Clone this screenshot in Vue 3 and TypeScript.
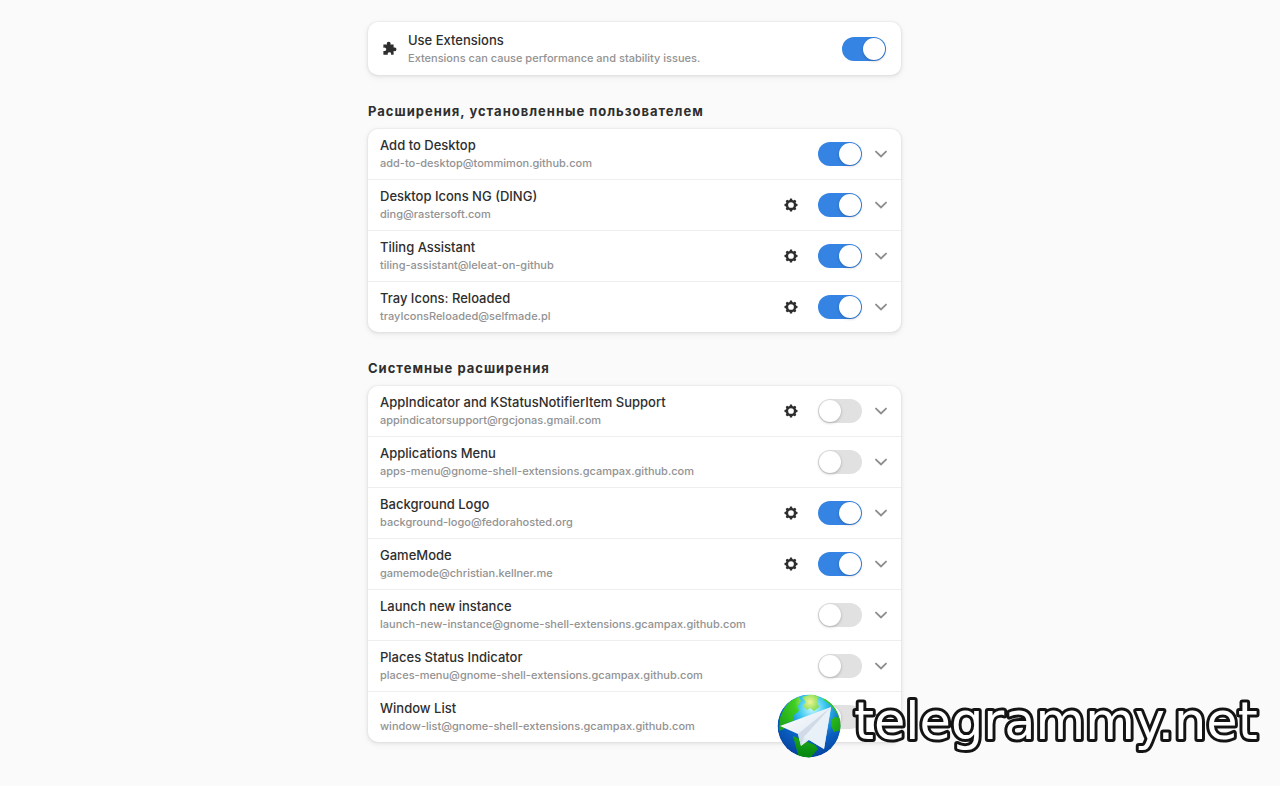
<script setup lang="ts">
import { reactive, ref } from 'vue'

interface Extension {
  name: string
  uuid: string
  enabled: boolean
  hasSettings: boolean
}

interface Group {
  id: string
  title: string
  items: Extension[]
}

const useExtensions = ref(true)

const ext = (name: string, uuid: string, enabled: boolean, hasSettings: boolean): Extension => ({
  name,
  uuid,
  enabled,
  hasSettings,
})

const groups = reactive<Group[]>([
  {
    id: 'user',
    title: 'Расширения, установленные пользователем',
    items: [
      ext('Add to Desktop', 'add-to-desktop@tommimon.github.com', true, false),
      ext('Desktop Icons NG (DING)', 'ding@rastersoft.com', true, true),
      ext('Tiling Assistant', 'tiling-assistant@leleat-on-github', true, true),
      ext('Tray Icons: Reloaded', 'trayIconsReloaded@selfmade.pl', true, true),
    ],
  },
  {
    id: 'system',
    title: 'Системные расширения',
    items: [
      ext('AppIndicator and KStatusNotifierItem Support', 'appindicatorsupport@rgcjonas.gmail.com', false, true),
      ext('Applications Menu', 'apps-menu@gnome-shell-extensions.gcampax.github.com', false, false),
      ext('Background Logo', 'background-logo@fedorahosted.org', true, true),
      ext('GameMode', 'gamemode@christian.kellner.me', true, true),
      ext('Launch new instance', 'launch-new-instance@gnome-shell-extensions.gcampax.github.com', false, false),
      ext('Places Status Indicator', 'places-menu@gnome-shell-extensions.gcampax.github.com', false, false),
      ext('Window List', 'window-list@gnome-shell-extensions.gcampax.github.com', false, false),
    ],
  },
])

const teeth = [0, 45, 90, 135, 180, 225, 270, 315]
</script>

<template>
  <main class="page">
    <div class="column">
      <section class="card master">
        <svg class="icon" viewBox="0 0 16 16" aria-hidden="true">
          <path
            fill="#2e2e2e"
            d="M2 3.4h3a1.9 1.9 0 1 1 3.4 0h3.2v3.2h.6a1.8 1.8 0 1 1 0 3.5h-.6v3.7H9.1v-.5a1.7 1.7 0 1 0-3.3 0v.5H1.4V9.9H2a1.7 1.7 0 1 0 0-3.2h-.6V3.4Z"
          />
        </svg>
        <label class="text" for="use-extensions">
          <span class="name">Use Extensions</span>
          <span class="detail">Extensions can cause performance and stability issues.</span>
        </label>
        <input id="use-extensions" v-model="useExtensions" class="switch" type="checkbox" role="switch" />
      </section>

      <section v-for="group in groups" :key="group.id" class="group">
        <h2 class="heading">{{ group.title }}</h2>
        <ul class="card list">
          <li v-for="item in group.items" :key="item.uuid" class="row">
            <label class="text" :for="item.uuid">
              <span class="name">{{ item.name }}</span>
              <span class="detail">{{ item.uuid }}</span>
            </label>
            <button v-if="item.hasSettings" class="icon-button gear" type="button" :aria-label="item.name">
              <svg class="icon" viewBox="0 0 16 16" aria-hidden="true">
                <circle cx="8" cy="8" r="4.1" fill="none" stroke="#2e2e2e" stroke-width="2.5" />
                <rect
                  v-for="angle in teeth"
                  :key="angle"
                  x="6.8"
                  y="1.5"
                  width="2.4"
                  height="2.4"
                  rx="0.6"
                  fill="#2e2e2e"
                  :transform="`rotate(${angle} 8 8)`"
                />
              </svg>
            </button>
            <input :id="item.uuid" v-model="item.enabled" class="switch" type="checkbox" role="switch" />
            <button class="icon-button" type="button" :aria-label="item.name">
              <svg class="icon" viewBox="0 0 16 16" aria-hidden="true">
                <path d="M3 5.6 8 10.4 13 5.6" fill="none" stroke="#8e8e8e" stroke-width="1.9" stroke-linecap="round" />
              </svg>
            </button>
          </li>
        </ul>
      </section>
    </div>

    <a class="watermark" href="#">
      <svg class="globe" viewBox="0 0 64 64" aria-hidden="true">
        <defs>
          <radialGradient id="sea" cx="0.55" cy="0.22" r="0.8">
            <stop offset="0" stop-color="#c8fbff" />
            <stop offset="0.28" stop-color="#35c4ee" />
            <stop offset="0.62" stop-color="#0a62c4" />
            <stop offset="1" stop-color="#06409c" />
          </radialGradient>
          <radialGradient id="land" gradientUnits="userSpaceOnUse" cx="33" cy="8" r="52">
            <stop offset="0" stop-color="#f2f59a" />
            <stop offset="0.3" stop-color="#3fce22" />
            <stop offset="1" stop-color="#078a12" />
          </radialGradient>
          <linearGradient id="wing" x1="0" y1="0" x2="1" y2="1">
            <stop offset="0" stop-color="#ffffff" />
            <stop offset="1" stop-color="#d3e0ee" />
          </linearGradient>
          <clipPath id="disc"><circle cx="32" cy="32" r="31.5" /></clipPath>
        </defs>
        <g clip-path="url(#disc)">
          <circle cx="32" cy="32" r="31.5" fill="url(#sea)" />
          <path fill="url(#land)" d="M3 24C7 12 14 5 22 3l2 4-3 5 1 5-5 4-1 6-6 2-3 6-5 2Z" />
          <path fill="url(#land)" d="M25 3l11-3 6 3-2 5 2 5-5 4-4-3-3 2-4-4 3-4Z" />
          <path fill="url(#land)" d="M45 5c9 5 14 12 17 19l-5-1-3 6 3 7 6 1 1-20-10-15Z" />
          <path fill="url(#land)" d="M55 25l9-2v13l-7 2-3-6Z" />
          <path fill="url(#land)" d="M16 42l10 4 12 5 3 4-8 9H22l-3-11Z" />
        </g>
        <path fill="url(#wing)" d="M3 32 54 13 47 55 32 46 24 52 21 40Z" />
        <path fill="#d0dbe7" d="M21 40 54 13 27 43 24 52Z" />
        <path fill="#e8f0f8" d="M27 43 54 13 47 55Z" />
      </svg>
      <svg class="brand" viewBox="0 0 414 64">
        <text x="5" y="45">telegrammy.net</text>
      </svg>
    </a>
  </main>
</template>

<style>
body {
  margin: 0;
  background: #fafafa;
}
</style>

<style scoped>
.page {
  box-sizing: border-box;
  min-height: 100vh;
  padding: 22px 11px 44px 0;
  background: #fafafa;
  color: #2e2e2e;
  font-family: Inter, 'Noto Sans', sans-serif;
}

.column {
  max-width: 533px;
  margin: 0 auto;
}

.card {
  margin: 0;
  padding: 0;
  border-radius: 10px;
  background: #fff;
  box-shadow:
    0 0 0 1px rgba(0, 0, 0, 0.02),
    0 1px 3px 1px rgba(0, 0, 0, 0.06),
    0 2px 6px 2px rgba(0, 0, 0, 0.03);
}

.master {
  display: flex;
  align-items: center;
  min-height: 53px;
  padding: 0 15px 0 14px;
}

.master .text {
  margin-left: 10px;
}

.group {
  margin-top: 27px;
}

.heading {
  margin: 0 0 9px;
  font-size: 13px;
  font-weight: 700;
  line-height: 18px;
  letter-spacing: 1px;
}

.list {
  list-style: none;
}

.row {
  display: flex;
  align-items: center;
  min-height: 50px;
  padding: 0 12px;
}

.row + .row {
  border-top: 1px solid #eeeeee;
}

.text {
  display: flex;
  flex: 1;
  flex-direction: column;
  min-width: 0;
  line-height: 18px;
}

.name {
  font-size: 13px;
  font-weight: 500;
}

.detail {
  color: #929292;
  font-size: 11px;
  font-weight: 500;
}

.icon {
  display: block;
  flex: none;
  width: 16px;
  height: 16px;
}

.icon-button {
  margin: 0;
  padding: 0;
  border: 0;
  background: none;
  cursor: pointer;
}

.gear {
  margin-right: 19px;
}

.switch {
  flex: none;
  width: 44px;
  height: 24px;
  margin: 0;
  padding: 1px;
  box-sizing: border-box;
  border-radius: 12px;
  background: #e1e1e1;
  appearance: none;
  cursor: pointer;
}

.switch::before {
  display: block;
  width: 22px;
  height: 22px;
  border-radius: 50%;
  background: #fff;
  box-shadow: 0 1px 3px rgba(0, 0, 0, 0.25);
  content: '';
}

.switch:checked {
  background: #3584e4;
}

.switch:checked::before {
  margin-left: auto;
}

.row .switch {
  margin-right: 11px;
}

.watermark {
  position: fixed;
  right: 17px;
  bottom: 28px;
  display: flex;
  align-items: center;
  gap: 8px;
  text-decoration: none;
}

.globe {
  display: block;
  width: 64px;
  height: 64px;
}

.brand {
  display: block;
  width: 414px;
  height: 64px;
  overflow: visible;
  fill: #fff;
  stroke: #141414;
  stroke-width: 6px;
  stroke-linejoin: round;
  paint-order: stroke fill;
  font-family: 'DejaVu Sans', sans-serif;
  font-size: 51px;
}
</style>
